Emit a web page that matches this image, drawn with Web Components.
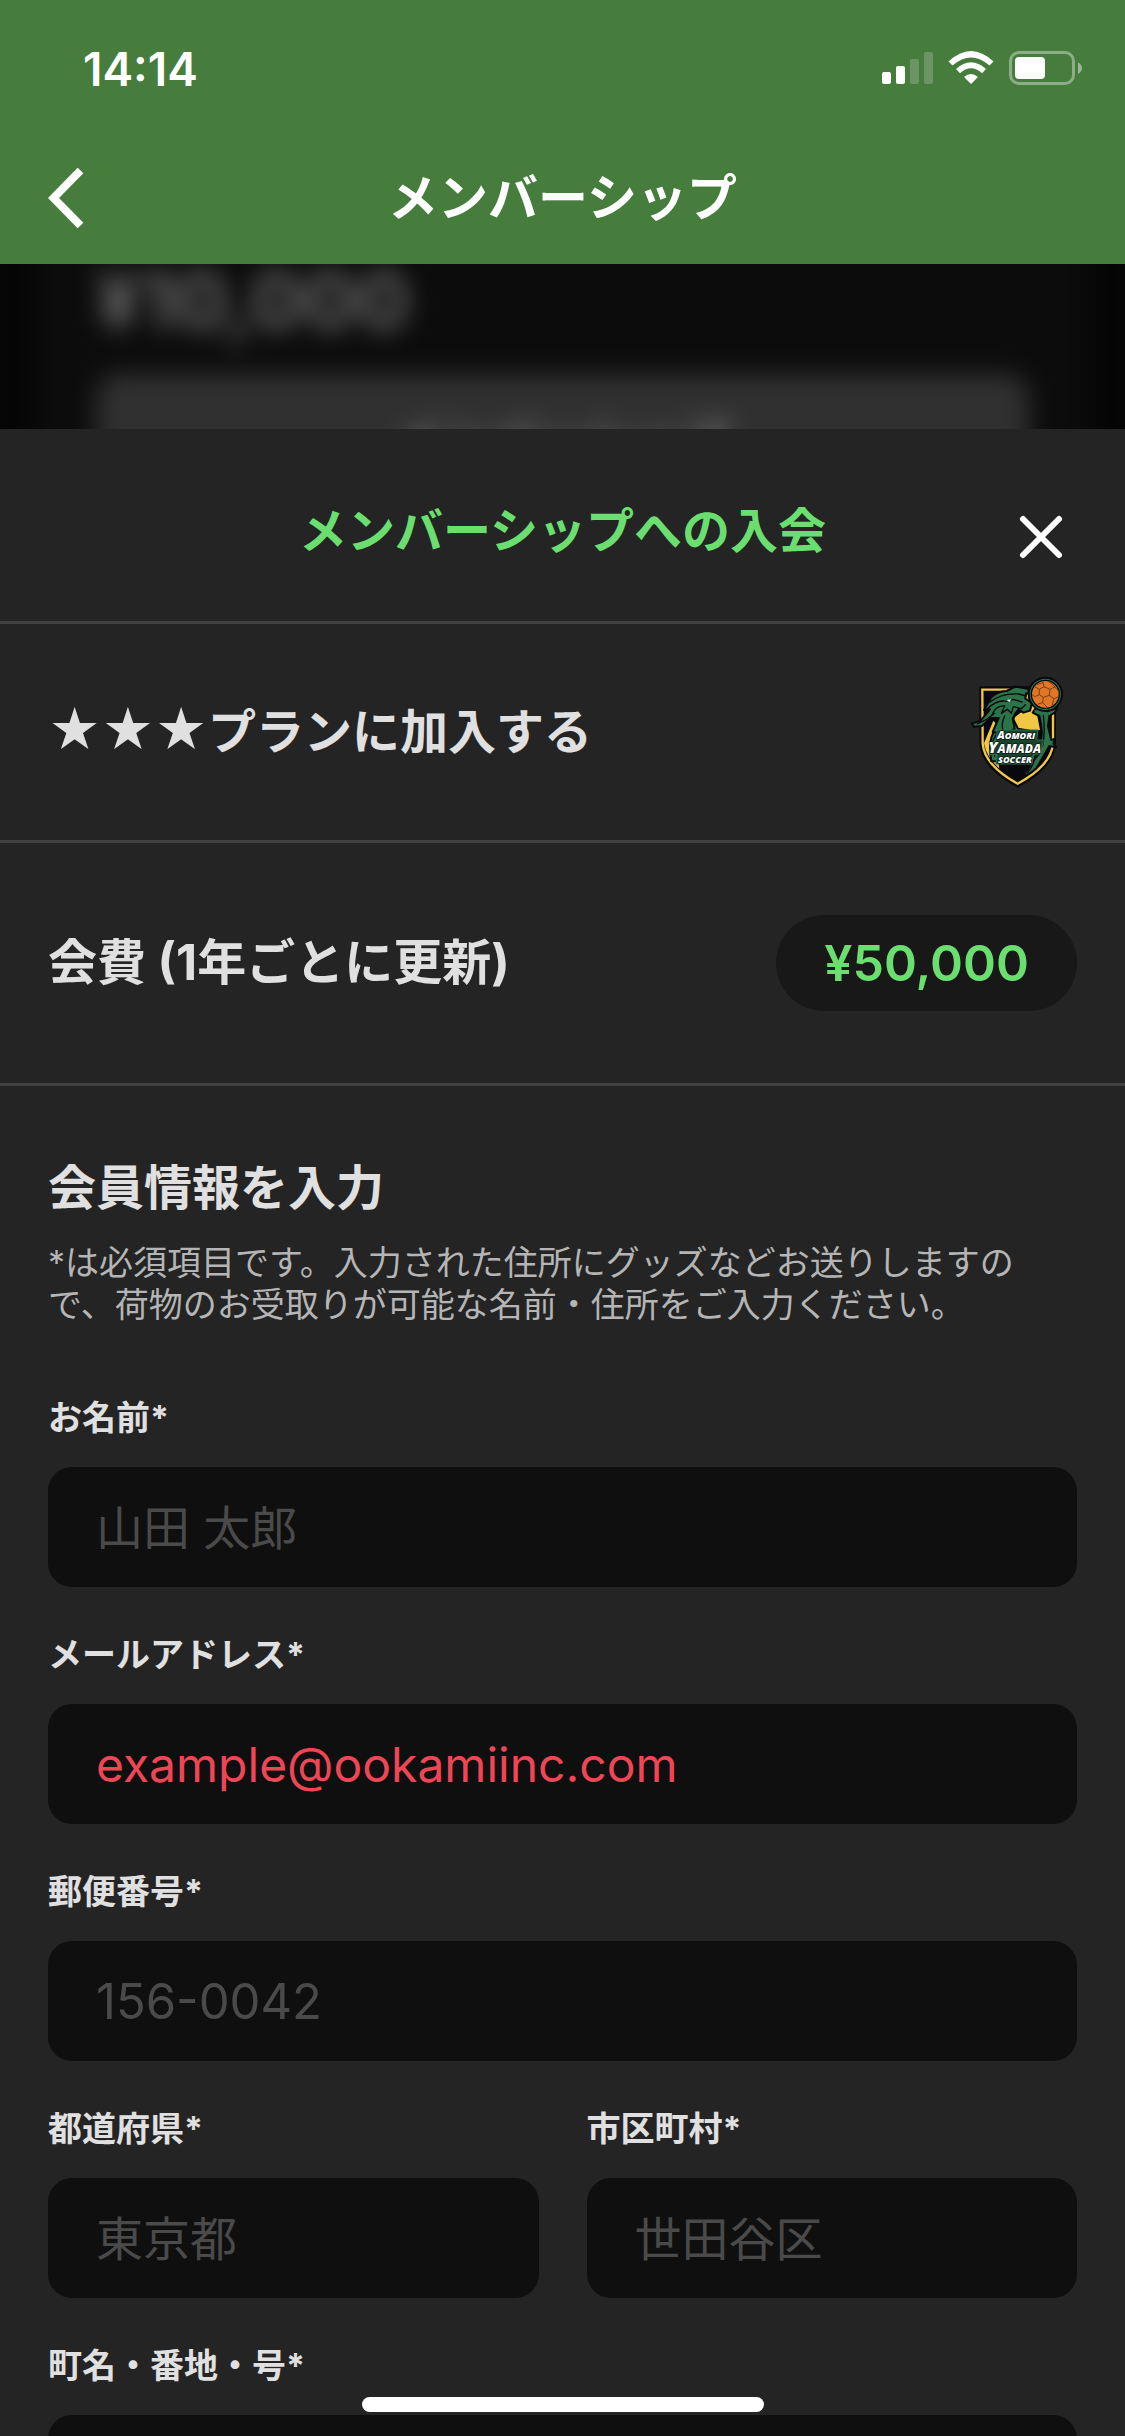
<!DOCTYPE html>
<html lang="ja">
<head>
<meta charset="utf-8">
<meta name="viewport" content="width=device-width, initial-scale=1">
<title>メンバーシップ</title>
<style>
  html, body { margin: 0; height: 100%; background: #242424; }
  body { font-family: Inter, "Noto Sans CJK JP", sans-serif; color: #e0e0e0; }
</style>
</head>
<body>
<membership-app>
  <status-bar slot="top" time="14:14"></status-bar>
  <nav-bar slot="top">メンバーシップ</nav-bar>
  <plan-backdrop slot="backdrop" price="¥10,000">メンバーシップ</plan-backdrop>
  <join-sheet>
    <span slot="title">メンバーシップへの入会</span>
    <sheet-row><plan-stars>★★★</plan-stars>プランに加入する<club-crest slot="end"></club-crest></sheet-row>
    <sheet-row tall>会費 (1年ごとに更新)<price-pill slot="end">¥50,000</price-pill></sheet-row>
    <form-section>
      <span slot="heading">会員情報を入力</span>
      <span slot="note">*は必須項目です。入力された住所にグッズなどお送りしますので、荷物のお受取りが可能な名前・住所をご入力ください。</span>
      <form-field label="お名前*" placeholder="山田 太郎"></form-field>
      <form-field label="メールアドレス*" type="email" value="example@ookamiinc.com" invalid></form-field>
      <form-field label="郵便番号*" placeholder="156-0042" numeric></form-field>
      <field-pair>
        <form-field label="都道府県*" placeholder="東京都"></form-field>
        <form-field label="市区町村*" placeholder="世田谷区"></form-field>
      </field-pair>
      <form-field label="町名・番地・号*"></form-field>
    </form-section>
  </join-sheet>
</membership-app>

<script>
const define = (name, html, init) => {
  const template = document.createElement('template');
  template.innerHTML = html;
  customElements.define(name, class extends HTMLElement {
    constructor() {
      super();
      this.attachShadow({ mode: 'open' }).append(template.content.cloneNode(true));
    }
    connectedCallback() { if (init) init(this, this.shadowRoot); }
  });
};

define('membership-app', `
<style>
  :host { display: flex; flex-direction: column; height: 100vh; overflow: hidden; position: relative; background: #060606; }
  header { background: #467c3c; color: #fff; flex: none; position: relative; z-index: 1; }
  .home { position: absolute; bottom: 24px; left: 50%; transform: translateX(-50%); width: 402px; height: 15px; border-radius: 8px; background: #fff; }
</style>
<header><slot name="top"></slot></header>
<slot name="backdrop"></slot>
<slot></slot>
<div class="home"></div>`);

define('status-bar', `
<style>
  :host { display: flex; align-items: center; justify-content: space-between; height: 132px; padding: 6px 43px 0 83px; box-sizing: border-box; font-size: 46px; font-weight: 600; }
  svg { display: block; }
</style>
<span></span>
<svg width="201" height="36" viewBox="0 0 201 36" fill="#fff" aria-hidden="true">
  <rect x="1" y="21" width="9" height="12" rx="2"/>
  <rect x="15" y="15" width="9" height="18" rx="2"/>
  <rect x="29" y="8" width="9" height="25" rx="2" opacity=".2"/>
  <rect x="43" y="1" width="9" height="32" rx="2" opacity=".2"/>
  <path d="M67.500 10.500Q90 -10.500 112.500 10.500L108.500 14.500Q90 -1.500 71.500 14.500Z"/>
  <path d="M75 18Q90 4.500 105 18L101 22.200Q90 12.500 79 22.200Z"/>
  <path d="M83 26Q90 20 97 26L90 33Z"/>
  <rect x="129.500" y="1.500" width="63" height="31" rx="8.500" fill="none" stroke="#fff" stroke-width="3" opacity=".38"/>
  <rect x="134" y="6" width="30" height="22" rx="4"/>
  <path d="M197 11.500Q201 13.500 201 17T197 23Z" opacity=".45"/>
</svg>`, (el, root) => { root.querySelector('span').textContent = el.getAttribute('time'); });

define('nav-bar', `
<style>
  :host { display: grid; grid-template-columns: 1fr auto 1fr; align-items: center; height: 132px; padding: 0 48px; }
  h1 { margin: 0; font-size: 50px; line-height: 60px; font-weight: 700; }
  button { justify-self: start; padding: 0; border: 0; background: none; color: inherit; }
  svg { display: block; }
</style>
<button type="button" aria-label="戻る"><svg width="36" height="60" viewBox="0 0 36 60" fill="none" stroke="currentColor" stroke-width="8"><path d="M32.500 2.500L5.500 30L32.500 57.500"/></svg></button>
<h1><slot></slot></h1>`);

define('plan-backdrop', `
<style>
  :host { display: block; flex: none; height: 165px; overflow: hidden; }
  .blur { filter: blur(12px); margin: -80px 36px 0; padding: 80px 60px 0; background: #0c0c0c; height: 320px; box-sizing: border-box; }
  p { margin: 0; font-size: 79px; line-height: 72px; font-weight: 700; color: #656565; }
  .join { margin-top: 38px; height: 144px; border-radius: 24px; background: #303030; display: grid; justify-items: center; font-size: 48px; line-height: 136px; font-weight: 700; color: #777; }
</style>
<div class="blur" aria-hidden="true"><p></p><div class="join"><slot></slot></div></div>`,
(el, root) => { root.querySelector('p').textContent = el.getAttribute('price'); });

define('join-sheet', `
<style>
  :host { display: block; flex: 1; min-height: 0; overflow-y: auto; scrollbar-width: none; background: #242424; }
  header { display: grid; grid-template-columns: 1fr auto 1fr; align-items: center; padding: 72px 60px 60px; border-bottom: 3px solid #404040; }
  h2 { grid-column: 2; margin: 0; font-size: 48px; line-height: 60px; font-weight: 700; color: #6bde70; }
  button { justify-self: end; padding: 12px 0 0; border: 0; background: none; color: #fff; }
  svg { display: block; }
</style>
<header><h2><slot name="title"></slot></h2>
<button type="button" aria-label="閉じる"><svg width="48" height="48" viewBox="0 0 48 48" fill="none" stroke="currentColor" stroke-width="6" stroke-linecap="round"><path d="M6 6L42 42M42 6L6 42"/></svg></button></header>
<slot></slot>`);

define('sheet-row', `
<style>
  :host { display: flex; align-items: center; justify-content: space-between; height: 216px; padding: 0 48px; border-bottom: 3px solid #404040; font-size: 48px; line-height: 60px; font-weight: 700; }
  :host([tall]) { height: 240px; font-size: 49px; }
</style>
<span><slot></slot></span><slot name="end"></slot>`);

define('plan-stars', `
<style>:host { display: inline; font-size: 51px; line-height: 48px; }</style>
<slot></slot>`);

define('price-pill', `
<style>
  :host { display: block; padding: 18px 48px; border-radius: 48px; background: #181818; color: #6bde70; font-size: 50px; line-height: 60px; font-weight: 600; }
</style>
<slot></slot>`);

define('club-crest', `
<style>
  :host { display: block; }
  svg { display: block; }
  text { font-family: "Open Sans", sans-serif; font-weight: 800; font-style: italic; fill: #fff; stroke: #0c1512; stroke-width: 4; paint-order: stroke; stroke-linejoin: round; }
</style>
<svg width="117" height="140" viewBox="0 6 351 420" role="img" aria-label="Aomori Yamada Soccer">
  <path d="M58 79H288V250Q284 325 173 383Q62 325 58 250Z" fill="#08080f"/>
  <path d="M67 89H279V250Q274 316 173 371Q73 316 68 250Z" fill="#08080f" stroke="#f2c744" stroke-width="7"/>
  <path d="M72 250L100 182L122 205L108 270L118 326Q78 290 72 250Z" fill="#f2c744"/>
  <path d="M198 94H232V168L240 210H150L166 170L196 148Z" fill="#f2c744"/>
  <g stroke="#08080f" stroke-width="6" stroke-linejoin="round" fill="#2a7449">
    <path d="M246 140L262 154L292 143L284 158L268 168L264 198L274 240L286 236L280 250L288 262L268 258L238 310Q222 342 181 349Q218 326 216 282L240 250Q252 222 238 168L218 158Q228 138 246 140Z"/>
    <path d="M106 210Q82 238 94 304H218L240 278L230 246L210 212L174 206L146 150Z"/>
    <path d="M36 190L60 184L90 148L72 150L94 112Q112 94 140 93L166 80L204 86L208 102L198 100L196 116L216 128L210 152L190 158L176 148L166 160L158 176L164 206L140 222L98 216L116 174L92 174L66 198L42 200Z"/>
    <circle cx="256" cy="103" r="50"/>
  </g>
  <g fill="none" stroke="#08080f" stroke-width="4" stroke-linecap="round" stroke-linejoin="round">
    <path d="M90 126Q126 98 176 102L198 108M82 146Q112 118 138 124L160 118L186 126M96 164Q108 136 134 138L124 160L142 148L154 160L160 140L184 146L196 134M52 192L80 178L104 160M134 168Q120 196 132 218M250 166Q256 216 248 258M226 284Q222 318 202 338M108 224L96 248L104 288"/>
  </g>
  <path d="M140 120L154 118L148 126Z" fill="#fff"/>
  <circle cx="256" cy="103" r="42" fill="#df7826" stroke="#08080f" stroke-width="4"/>
  <path d="M238 88L252 80L270 88L268 106L250 112L238 104ZM252 80L248 62M270 88L286 80M268 106L282 116L296 110M282 116L276 136M250 112L248 128L234 132M248 128L262 142M238 104L224 110L216 104M238 88L224 80M248 68L230 74M264 64L280 74L286 84L297 94" fill="none" stroke="#7a3d18" stroke-width="3"/>
  <path d="M112 210H234L230 240H250L242 282H220L216 312H108L112 284H88L94 244H108Z" fill="#17442d" stroke="#2a7449" stroke-width="3"/>
  <text x="112" y="237" font-size="33">A<tspan font-size="27">OMORI</tspan></text>
  <text x="85" y="278" font-size="46">Y<tspan font-size="36">AMADA</tspan></text>
  <text x="114" y="308" font-size="27">SOCCER</text>
</svg>`);

define('form-section', `
<style>
  :host { display: block; padding: 72px 48px; }
  h3 { margin: 0 0 24px; font-size: 48px; line-height: 60px; font-weight: 700; }
  p { margin: 0 0 71px; font-size: 34px; line-height: 42px; color: #b5b5b5; }
  form { display: flex; flex-direction: column; gap: 47px; }
</style>
<h3><slot name="heading"></slot></h3>
<p><slot name="note"></slot></p>
<form><slot></slot></form>`);

define('field-pair', `
<style>:host { display: grid; grid-template-columns: 1fr 1fr; gap: 48px; }</style>
<slot></slot>`);

define('form-field', `
<style>
  :host { display: flex; flex-direction: column; gap: 28px; min-width: 0; }
  label { font-size: 34px; line-height: 42px; font-weight: 700; }
  input { box-sizing: border-box; width: 100%; height: 120px; padding: 0 48px; border: 0; border-radius: 24px; background: #0f0f0f; color: #e0e0e0; font: inherit; font-size: 47px; }
  input::placeholder { color: #4a4a4a; opacity: 1; }
  input[type="email"] { font-size: 48px; }
  :host([numeric]) input { font-size: 49px; }
  :host([invalid]) input { color: #ef4655; }
</style>
<label for="field"></label><input id="field">`,
(el, root) => {
  const input = root.querySelector('input');
  root.querySelector('label').textContent = el.getAttribute('label');
  input.type = el.getAttribute('type') || 'text';
  input.placeholder = el.getAttribute('placeholder') || '';
  input.value = el.getAttribute('value') || '';
});
</script>
</body>
</html>
